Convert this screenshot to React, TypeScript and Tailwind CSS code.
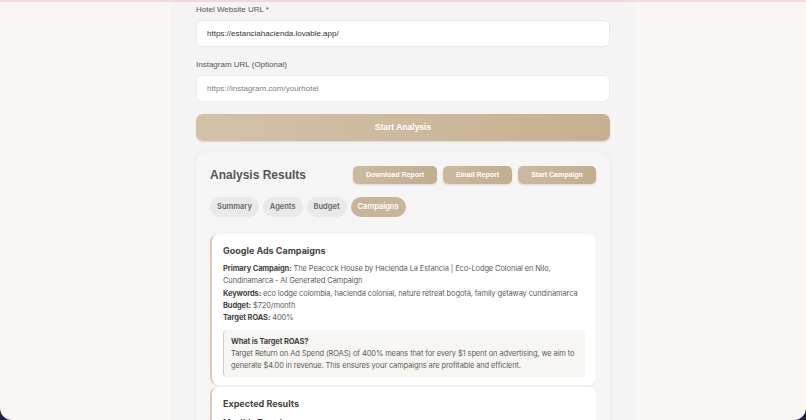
import React from 'react'

const tabs = ['Summary', 'Agents', 'Budget', 'Campaigns']

export default function App() {
  return (
    <div className="relative h-[420px] overflow-hidden bg-[#f9f6f3] font-['Liberation_Sans',Arial,sans-serif]">
      <div className="h-[2px] bg-[#f1dcdf]" />

      <div className="mx-auto w-[460px] min-h-[420px] bg-[#f4f4f4] px-[23px] pt-[3px] shadow-[0_0_6px_rgba(0,0,0,0.04)]">
        <Field label="Hotel Website URL *" value="https://estanciahacienda.lovable.app/" />
        <div className="h-[13px]" />
        <Field label="Instagram URL (Optional)" placeholder="https://instagram.com/yourhotel" />

        <button className="mt-[12px] h-[27px] w-full rounded-[7px] bg-gradient-to-r from-[#d4c2a7] to-[#c6b091] text-[8.5px] font-bold text-white shadow-[0_1px_2px_rgba(0,0,0,0.12)]">
          Start Analysis
        </button>

        <ResultsCard />
      </div>

      <Corner side="left" />
      <Corner side="right" />
    </div>
  )
}

function Field({ label, value, placeholder }: { label: string; value?: string; placeholder?: string }) {
  return (
    <div>
      <div className="text-[8px] leading-[10px] text-[#555]">{label}</div>
      <div className="mt-[5px] flex h-[27px] items-center rounded-[6px] border border-[#ebebeb] bg-white px-[10px] text-[8px]">
        {value ? (
          <span className="text-[#333]">{value}</span>
        ) : (
          <span className="text-[#808080]">{placeholder}</span>
        )}
      </div>
    </div>
  )
}

function ResultsCard() {
  return (
    <div className="mt-[11px] rounded-[12px] bg-[#f5f5f5] px-[14px] pt-[14px] pb-[20px] shadow-[0_1px_6px_rgba(0,0,0,0.06)]">
      <div className="flex h-[18px] items-center justify-between">
        <h2 className="text-[12px] font-bold text-[#555]">Analysis Results</h2>
        <div className="flex gap-[6px]">
          <SmallButton label="Download Report" w="w-[84px]" />
          <SmallButton label="Email Report" w="w-[69px]" />
          <SmallButton label="Start Campaign" w="w-[78px]" />
        </div>
      </div>

      <div className="mt-[13px] flex gap-[4px] font-['Inter',sans-serif]">
        {tabs.map((t) =>
          t === 'Campaigns' ? (
            <span
              key={t}
              className="flex h-[20px] items-center rounded-full bg-[#c8b498] px-[7px] text-[7.5px] font-semibold text-white"
            >
              {t}
            </span>
          ) : (
            <span
              key={t}
              className="flex h-[20px] items-center rounded-full bg-[#e9e9e9] px-[7px] text-[7.5px] font-semibold text-[#666]"
            >
              {t}
            </span>
          )
        )}
      </div>

      <div className="mt-[17px] flex flex-col gap-[2px] font-['Inter',sans-serif]">
        <div className="rounded-[8px] border-l-2 border-[#dccbb2] bg-white px-[11px] pt-[11px] pb-[8px] shadow-[0_1px_3px_rgba(0,0,0,0.04)]">
          <h3 className="text-[9px] font-bold leading-[12px] text-[#444]">Google Ads Campaigns</h3>
          <div className="mt-[6px] text-[7.5px] leading-[12.3px] tracking-[-0.12px] text-[#5c5c5c]">
            <p>
              <b className="text-[#444]">Primary Campaign:</b> The Peacock House by Hacienda La Estancia | Eco-Lodge
              Colonial en Nilo, Cundinamarca - AI Generated Campaign
            </p>
            <p className="whitespace-nowrap">
              <b className="text-[#444]">Keywords:</b> eco lodge colombia, hacienda colonial, nature retreat bogotá,
              family getaway cundinamarca
            </p>
            <p>
              <b className="text-[#444]">Budget:</b> $720/month
            </p>
            <p>
              <b className="text-[#444]">Target ROAS:</b> 400%
            </p>
          </div>
          <div className="mt-[6px] rounded-[4px] border-l border-[#dccbb2] bg-[#f8f6f2] px-[7px] pt-[6px] pb-[5px] text-[7.5px] leading-[12px] tracking-[-0.12px] text-[#5c5c5c]">
            <div className="font-bold text-[#444]">What is Target ROAS?</div>
            <p>
              Target Return on Ad Spend (ROAS) of 400% means that for every $1 spent on advertising, we aim to
              generate $4.00 in revenue. This ensures your campaigns are profitable and efficient.
            </p>
          </div>
        </div>

        <div className="rounded-[8px] border-l-2 border-[#dccbb2] bg-white px-[11px] pt-[11px] pb-[8px]">
          <h3 className="text-[9px] font-bold leading-[12px] text-[#444]">Expected Results</h3>
          <div className="mt-[6px] text-[8px] font-bold leading-[12px] text-[#444]">Monthly Targets</div>
          <div className="text-[7.5px] leading-[12.3px] text-[#5c5c5c]">Bookings: 18</div>
        </div>
      </div>
    </div>
  )
}

function SmallButton({ label, w }: { label: string; w: string }) {
  return (
    <button
      className={
        'flex h-[18px] items-center justify-center rounded-[5px] bg-gradient-to-r from-[#cdb99d] to-[#c2ad8f] text-[7px] font-bold text-white shadow-[0_1px_2px_rgba(0,0,0,0.12)] ' +
        w
      }
    >
      {label}
    </button>
  )
}

function Corner({ side }: { side: 'left' | 'right' }) {
  return (
    <svg
      width="12"
      height="12"
      viewBox="0 0 12 12"
      className={side === 'left' ? 'absolute bottom-0 left-0' : 'absolute bottom-0 right-0'}
    >
      {side === 'left' ? (
        <path d="M0 0 A12 12 0 0 0 12 12 L0 12 Z" fill="#23203f" />
      ) : (
        <path d="M12 0 A12 12 0 0 1 0 12 L12 12 Z" fill="#23203f" />
      )}
    </svg>
  )
}
